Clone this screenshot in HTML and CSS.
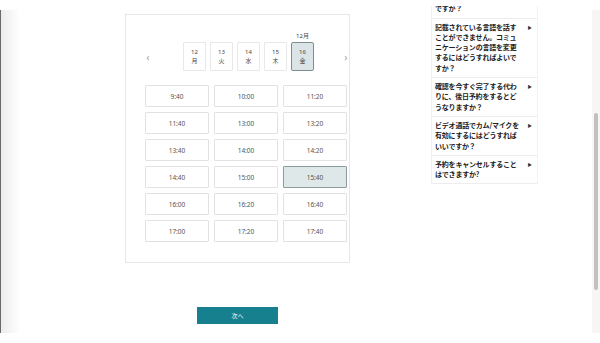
FILE: index.html
```html
<!DOCTYPE html>
<html lang="ja">
<head>
    <meta charset="UTF-8">
    <meta name="viewport" content="width=device-width, initial-scale=1.0">
    <title>予約</title>
    <link rel="stylesheet" href="styles.css">
</head>
<body>
    <div class="screen">
        <div class="edge"></div>

        <!-- 日時の選択 -->
        <main class="booking">
            <section class="card">
                <div class="days">
                    <button class="nav">&#8249;</button>
                    <div class="day-list">
                        <div class="day"><span class="month"></span><button class="date">12<br>月</button></div>
                        <div class="day"><span class="month"></span><button class="date">13<br>火</button></div>
                        <div class="day"><span class="month"></span><button class="date">14<br>水</button></div>
                        <div class="day"><span class="month"></span><button class="date">15<br>木</button></div>
                        <div class="day"><span class="month">12月</span><button class="date selected">16<br>金</button></div>
                    </div>
                    <button class="nav">&#8250;</button>
                </div>

                <div class="slots">
                    <button class="slot">9:40</button>
                    <button class="slot">10:00</button>
                    <button class="slot">11:20</button>
                    <button class="slot">11:40</button>
                    <button class="slot">13:00</button>
                    <button class="slot">13:20</button>
                    <button class="slot">13:40</button>
                    <button class="slot">14:00</button>
                    <button class="slot">14:20</button>
                    <button class="slot">14:40</button>
                    <button class="slot">15:00</button>
                    <button class="slot selected">15:40</button>
                    <button class="slot">16:00</button>
                    <button class="slot">16:20</button>
                    <button class="slot">16:40</button>
                    <button class="slot">17:00</button>
                    <button class="slot">17:20</button>
                    <button class="slot">17:40</button>
                </div>
            </section>

            <button class="next-btn">次へ</button>
        </main>

        <!-- よくある質問 -->
        <div class="faq-wrap">
            <aside class="faq">
                <div class="faq-item"><p>予約の変更はいつまで可能ですか？</p><span class="arrow">&#9654;</span></div>
                <div class="faq-item"><p>記載されている言語を話すことができません。コミュニケーションの言語を変更するにはどうすればよいですか？</p><span class="arrow">&#9654;</span></div>
                <div class="faq-item"><p>確認を今すぐ完了する代わりに、後日予約をするとどうなりますか？</p><span class="arrow">&#9654;</span></div>
                <div class="faq-item"><p>ビデオ通話でカム/マイクを有効にするにはどうすればいいですか？</p><span class="arrow">&#9654;</span></div>
                <div class="faq-item"><p>予約をキャンセルすることはできますか?</p><span class="arrow">&#9654;</span></div>
            </aside>
        </div>

        <div class="scrollbar"><div class="thumb"></div></div>
    </div>
</body>
</html>
```

FILE: styles.css
```css
* {
    margin: 0;
    padding: 0;
    box-sizing: border-box;
}

body {
    width: 600px;
    height: 343px;
    overflow: hidden;
    background: #fff;
    font-family: "Noto Sans", "Noto Sans CJK JP", sans-serif;
    color: #555;
}

button {
    font-family: inherit;
    background: #fff;
    cursor: pointer;
}

.screen {
    display: flex;
    height: 343px;
}

/* 左端の影 */
.edge {
    width: 20px;
    margin: 10px 0;
    border-left: 1px solid #6a6a6a;
    background: linear-gradient(to right, #ececec, #fff);
}

/* 予約カード */
.booking {
    display: flex;
    flex-direction: column;
    width: 225px;
    margin-left: 105px;
    padding-top: 14px;
}

.card {
    border: 1px solid #e6e6e6;
    padding: 16px 2px 20px 19px;
}

.days {
    display: flex;
    justify-content: space-between;
    align-items: flex-end;
    margin-right: -2px;
}

.nav {
    border: none;
    width: 6px;
    height: 29px;
    font-size: 11px;
    line-height: 29px;
    color: #aaa;
}

.day-list {
    display: flex;
    gap: 4px;
    margin-left: 3px;
}

.day {
    display: flex;
    flex-direction: column;
    align-items: center;
}

.month {
    height: 10px;
    margin-bottom: 1px;
    font-size: 6px;
    line-height: 10px;
    color: #444;
}

.date {
    width: 23px;
    height: 29px;
    border: 1px solid #e8e8e8;
    border-radius: 1px;
    font-size: 6px;
    line-height: 9px;
    color: #444;
}

.date.selected {
    background: #dbe5e7;
    border: 1.5px solid #7f8d90;
    border-radius: 2px;
}

.slots {
    display: grid;
    grid-template-columns: repeat(3, 64px);
    grid-auto-rows: 22px;
    gap: 5px;
    margin-top: 14px;
}

.slot {
    border: 1px solid #e2e2e2;
    border-radius: 1px;
    font-size: 6.5px;
    color: #555;
}

.slot.selected {
    background: #dfe8e9;
    border-color: #8c9b9d;
}

.next-btn {
    align-self: center;
    width: 81px;
    height: 17px;
    margin-top: 44px;
    border: none;
    background: #17808f;
    color: #fff;
    font-size: 6px;
}

/* よくある質問 */
.faq-wrap {
    width: 107px;
    height: 327px;
    margin: 6px 0 0 81px;
    overflow: hidden;
}

.faq {
    margin-top: -16px;
    border-left: 1px solid #f0f0f0;
    border-right: 1px solid #f3f3f3;
}

.faq-item {
    display: flex;
    justify-content: space-between;
    padding: 3px 5px 4px 3px;
    border-bottom: 1px solid #ececec;
    font-family: "Noto Sans CJK JP", sans-serif;
}

.faq-item p {
    width: 88px;
    font-size: 7px;
    font-weight: 700;
    line-height: 10.3px;
    letter-spacing: -0.2px;
    color: #222;
}

.arrow {
    font-size: 4.5px;
    line-height: 10.3px;
    color: #333;
}

/* スクロールバー */
.scrollbar {
    width: 8px;
    margin: 10px 0 10px auto;
    padding-top: 103px;
    background: #f6f6f6;
}

.thumb {
    width: 4px;
    height: 177px;
    margin-left: 2px;
    border-radius: 2px;
    background: #c1c1c1;
}
```
